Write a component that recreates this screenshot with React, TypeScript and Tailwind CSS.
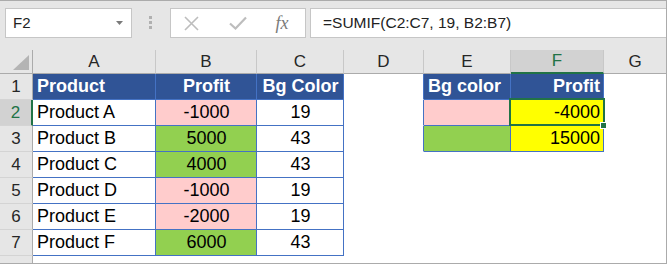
import React from 'react';

type C = { t?: string; bg?: string; al?: 'l' | 'c' | 'r'; b?: string; bold?: boolean; white?: boolean };

const HB = 'bg-[#305496]';
const TB = 'border-r-[#4472c4] border-b-[#4472c4]';
const NB = 'border-r-transparent border-b-transparent';
const DB = 'border-r-[#4472c4] border-b-transparent';

const widths = ['w-[123px]', 'w-[101px]', 'w-[87px]', 'w-[80px]', 'w-[87px]', 'w-[93px]'];

function Cell({ w, c }: { w: string; c: C }) {
  const al = c.al === 'c' ? 'justify-center' : c.al === 'r' ? 'justify-end' : 'justify-start';
  return (
    <div
      className={`${w} shrink-0 h-full flex items-center pl-[4px] pr-[3px] border-r border-b whitespace-nowrap ${c.b ?? NB} ${c.bg ?? 'bg-white'} ${al} ${c.bold ? 'font-bold' : ''} ${c.white ? 'text-white' : 'text-black'}`}
    >
      {c.t}
    </div>
  );
}

const PINK = 'bg-[#ffcccc]';
const GREEN = 'bg-[#92d050]';
const YEL = 'bg-[#ffff00]';

const rows: C[][] = [
  [
    { t: 'Product', bg: HB, b: TB, bold: true, white: true },
    { t: 'Profit', bg: HB, b: TB, bold: true, white: true, al: 'c' },
    { t: 'Bg Color', bg: HB, b: TB, bold: true, white: true, al: 'c' },
    { b: DB },
    { t: 'Bg color', bg: HB, b: TB, bold: true, white: true },
    { t: 'Profit', bg: HB, b: TB, bold: true, white: true, al: 'r' },
  ],
  [
    { t: 'Product A', b: TB },
    { t: '-1000', bg: PINK, b: TB, al: 'c' },
    { t: '19', b: TB, al: 'c' },
    { b: DB },
    { bg: PINK, b: TB },
    { t: '-4000', bg: YEL, b: TB, al: 'r' },
  ],
  [
    { t: 'Product B', b: TB },
    { t: '5000', bg: GREEN, b: TB, al: 'c' },
    { t: '43', b: TB, al: 'c' },
    { b: DB },
    { bg: GREEN, b: TB },
    { t: '15000', bg: YEL, b: TB, al: 'r' },
  ],
  [
    { t: 'Product C', b: TB },
    { t: '4000', bg: GREEN, b: TB, al: 'c' },
    { t: '43', b: TB, al: 'c' },
    {},
    {},
    {},
  ],
  [
    { t: 'Product D', b: TB },
    { t: '-1000', bg: PINK, b: TB, al: 'c' },
    { t: '19', b: TB, al: 'c' },
    {},
    {},
    {},
  ],
  [
    { t: 'Product E', b: TB },
    { t: '-2000', bg: PINK, b: TB, al: 'c' },
    { t: '19', b: TB, al: 'c' },
    {},
    {},
    {},
  ],
  [
    { t: 'Product F', b: TB },
    { t: '6000', bg: GREEN, b: TB, al: 'c' },
    { t: '43', b: TB, al: 'c' },
    {},
    {},
    {},
  ],
];

const letters = ['A', 'B', 'C', 'D', 'E', 'F'];

export default function App() {
  return (
    <div className="relative w-[667px] h-[264px] overflow-hidden bg-white border-t border-r border-b border-[#ababab] flex flex-col font-['Liberation_Sans',Arial,sans-serif]">
      {/* Formula bar */}
      <div className="h-[49px] shrink-0 bg-[#e6e6e6] flex items-start pt-[7px] pl-[5px]">
        <div className="w-[127px] h-[30px] shrink-0 bg-white border border-[#c6c6c6] flex items-center pl-[7px] pr-[8px] text-[15px] text-[#222]">
          <span className="flex-1">F2</span>
          <svg width="7" height="4" viewBox="0 0 7 4">
            <path d="M0 0h7L3.5 4z" fill="#7a7a7a" />
          </svg>
        </div>
        <div className="ml-[17px] mt-[8px] flex flex-col gap-[2px] shrink-0">
          <div className="w-[3px] h-[3px] bg-[#b0b0b0]" />
          <div className="w-[3px] h-[3px] bg-[#b0b0b0]" />
          <div className="w-[3px] h-[3px] bg-[#b0b0b0]" />
        </div>
        <div className="ml-[18px] w-[136px] h-[30px] shrink-0 bg-white border border-[#c6c6c6] flex items-center">
          <div className="w-[40px] flex justify-center">
            <svg width="15" height="15" viewBox="0 0 15 15">
              <path d="M1 1L14 14M14 1L1 14" stroke="#bdbdbd" strokeWidth="1.6" fill="none" />
            </svg>
          </div>
          <div className="w-[54px] flex justify-center">
            <svg width="18" height="14" viewBox="0 0 18 14">
              <path d="M1 7.5L6.5 12.5L17 1.5" stroke="#bdbdbd" strokeWidth="2.2" fill="none" />
            </svg>
          </div>
          <div className="w-[34px] flex justify-center text-[18px] italic text-[#7a7a7a] font-['Liberation_Serif',serif] leading-none">
            fx
          </div>
        </div>
        <div className="ml-[4px] flex-1 h-[30px] bg-white border-y border-l border-[#c6c6c6] flex items-center pl-[12px] text-[15.5px] text-[#222] whitespace-nowrap">
          =SUMIF(C2:C7, 19, B2:B7)
        </div>
      </div>

      {/* Column headers */}
      <div className="h-[24px] shrink-0 flex bg-[#e6e6e6] text-[17px] text-[#262626]">
        <div className="w-[33px] shrink-0 h-full border-r border-b border-[#ababab] relative">
          <svg width="32" height="23" className="absolute left-0 top-0">
            <polygon points="13,20 29,20 29,5" fill="#b4b4b4" />
          </svg>
        </div>
        {letters.map((l, i) =>
          l === 'F' ? (
            <div
              key={l}
              className={`${widths[i]} shrink-0 h-full flex items-center justify-center bg-[#d2d2d2] text-[#217346] border-r border-r-[#c8c8c8] border-b-2 border-b-[#217346]`}
            >
              {l}
            </div>
          ) : (
            <div
              key={l}
              className={`${widths[i]} shrink-0 h-full flex items-center justify-center border-r border-r-[#c8c8c8] border-b border-b-[#ababab]`}
            >
              {l}
            </div>
          )
        )}
        <div className="flex-1 h-full flex items-center justify-center border-b border-b-[#ababab]">G</div>
      </div>

      {/* Rows */}
      {rows.map((r, ri) => (
        <div key={ri} className="h-[26px] shrink-0 flex text-[18px]">
          {ri === 1 ? (
            <div className="w-[33px] shrink-0 h-full flex items-center justify-center bg-[#d2d2d2] text-[#217346] border-r-2 border-r-[#217346] border-b border-b-[#d4d4d4] text-[17px]">
              {ri + 1}
            </div>
          ) : (
            <div className="w-[33px] shrink-0 h-full flex items-center justify-center bg-[#e6e6e6] text-[#262626] border-r border-r-[#ababab] border-b border-b-[#d4d4d4] text-[17px]">
              {ri + 1}
            </div>
          )}
          {r.map((c, ci) => (
            <Cell key={ci} w={widths[ci]} c={c} />
          ))}
          <div className="flex-1 h-full bg-white" />
        </div>
      ))}
      <div className="flex-1 flex">
        <div className="w-[33px] shrink-0 h-full bg-[#e6e6e6] border-r border-r-[#ababab]" />
        <div className="flex-1 bg-white" />
      </div>

      {/* Selection overlay for F2 */}
      <div className="absolute left-[509px] top-[97px] w-[96px] h-[28px] border-2 border-[#217346] pointer-events-none" />
      <div className="absolute left-[600px] top-[121px] w-[7px] h-[7px] bg-[#217346] border border-white pointer-events-none" />
    </div>
  );
}
